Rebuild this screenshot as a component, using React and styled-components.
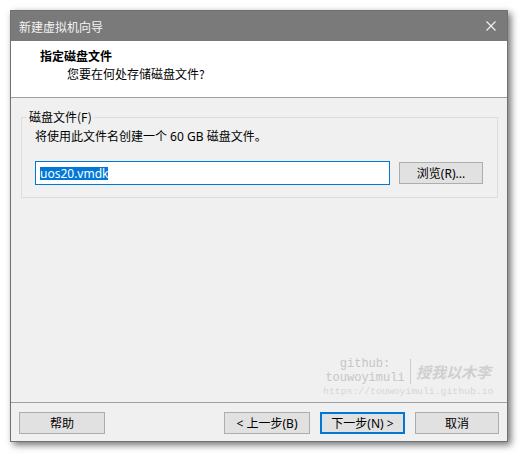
import React from 'react';
import styled, { createGlobalStyle } from 'styled-components';

const GlobalStyle = createGlobalStyle`
  html, body {
    margin: 0;
    padding: 0;
    background: #ffffff;
  }
  body {
    font-family: "Noto Sans", "Noto Sans CJK SC", sans-serif;
    font-size: 12px;
    color: #000;
  }
  * {
    box-sizing: border-box;
  }
`;

const Page = styled.div`
  width: 520px;
  height: 454px;
  padding: 10px 0 0 10px;
`;

const Window = styled.div`
  position: relative;
  width: 498px;
  height: 432px;
  display: flex;
  flex-direction: column;
  background: #f0f0f0;
  border: 1px solid #707070;
  box-shadow: 3px 3px 7px rgba(0, 0, 0, 0.55);
`;

const TitleBar = styled.div`
  height: 30px;
  flex: none;
  display: flex;
  align-items: center;
  justify-content: space-between;
  padding: 0 10px 0 8px;
  background: #7a7a7a;
  color: #f4f4f4;
  font-family: "Noto Sans CJK SC", sans-serif;
  font-size: 12px;
`;

const CloseIcon = styled.svg`
  width: 10px;
  height: 10px;
  margin-right: 1px;
`;

const Header = styled.div`
  height: 57px;
  flex: none;
  padding: 6px 0 0 29px;
  background: #ffffff;
  border-bottom: 1px solid #a0a0a0;
  font-family: "Noto Sans CJK SC", sans-serif;
  line-height: 18px;
`;

const HeaderTitle = styled.div`
  font-weight: bold;
`;

const HeaderSub = styled.div`
  padding-left: 27px;
`;

const Body = styled.div`
  flex: 1;
  padding: 10px 9px 0 10px;
`;

const Group = styled.fieldset`
  margin: 0;
  padding: 2px 14px 12px 13px;
  border: 1px solid #dcdcdc;
`;

const Legend = styled.legend`
  margin-left: -8px;
  padding: 0 2px;
  line-height: 18px;
  font-family: "Noto Sans CJK SC", sans-serif;
`;

const Info = styled.div`
  line-height: 18px;
  font-family: "Noto Sans", "Noto Sans CJK SC", sans-serif;
`;

const Row = styled.div`
  display: flex;
  align-items: flex-start;
  margin-top: 15px;
`;

const Field = styled.div`
  width: 355px;
  height: 24px;
  display: flex;
  align-items: center;
  padding-left: 4px;
  background: #ffffff;
  border: 1px solid #0078d7;
  font-family: "Noto Sans", sans-serif;
`;

const Selected = styled.span`
  background: #0078d7;
  color: #ffffff;
  line-height: 13px;
`;

const Button = styled.div`
  width: ${p => p.$w || 86}px;
  height: 22px;
  display: flex;
  align-items: center;
  justify-content: center;
  background: #e1e1e1;
  border: ${p => (p.$primary ? '2px solid #0078d7' : '1px solid #adadad')};
  font-family: "Noto Sans", "Noto Sans CJK SC", sans-serif;
  white-space: pre;
`;

const BrowseButton = styled(Button)`
  margin: 1px 0 0 9px;
`;

const Footer = styled.div`
  height: 39px;
  flex: none;
  display: flex;
  align-items: flex-start;
  gap: 10px;
  padding: 9px 8px 0 8px;
  border-top: 1px solid #a0a0a0;
`;

const Spacer = styled.div`
  flex: 1;
`;

const Watermark = styled.div`
  position: absolute;
  left: 312px;
  top: 346px;
  color: #c6c6c6;
  pointer-events: none;
`;

const MarkTop = styled.div`
  display: flex;
  align-items: center;
`;

const MarkHandle = styled.div`
  width: 80px;
  margin-left: 2px;
  text-align: center;
  font-family: "Liberation Mono", monospace;
  font-size: 12px;
  line-height: 14px;
`;

const MarkLine = styled.div`
  height: 14px;
`;

const MarkDivider = styled.div`
  width: 1px;
  height: 25px;
  margin: 0 5px;
  background: #cccccc;
`;

const MarkName = styled.div`
  font-family: "Noto Sans CJK SC", serif;
  font-size: 15px;
  font-style: italic;
  font-weight: bold;
  color: #cfcfcf;
`;

const MarkUrl = styled.div`
  margin-top: 1px;
  font-family: "Liberation Mono", monospace;
  font-size: 9.8px;
  line-height: 12px;
  color: #d6d6d6;
`;

export default function App() {
  return (
    <Page>
      <GlobalStyle />
      <Window>
        <TitleBar>
          <span>新建虚拟机向导</span>
          <CloseIcon viewBox="0 0 10 10">
            <path d="M0.5 0.5 L9.5 9.5 M9.5 0.5 L0.5 9.5" stroke="#f4f4f4" strokeWidth="1.1" fill="none" />
          </CloseIcon>
        </TitleBar>
        <Header>
          <HeaderTitle>指定磁盘文件</HeaderTitle>
          <HeaderSub>您要在何处存储磁盘文件?</HeaderSub>
        </Header>
        <Body>
          <Group>
            <Legend>磁盘文件(F)</Legend>
            <Info>将使用此文件名创建一个 60 GB 磁盘文件。</Info>
            <Row>
              <Field>
                <Selected>uos20.vmdk</Selected>
              </Field>
              <BrowseButton $w={84}>浏览(R)...</BrowseButton>
            </Row>
          </Group>
        </Body>
        <Footer>
          <Button>帮助</Button>
          <Spacer />
          <Button>{'< 上一步(B)'}</Button>
          <Button $primary $w={85}>{'下一步(N) >'}</Button>
          <Button $w={84}>取消</Button>
        </Footer>
        <Watermark>
          <MarkTop>
            <MarkHandle>
              <MarkLine>github:</MarkLine>
              <MarkLine>touwoyimuli</MarkLine>
            </MarkHandle>
            <MarkDivider />
            <MarkName>授我以木李</MarkName>
          </MarkTop>
          <MarkUrl>https://touwoyimuli.github.io</MarkUrl>
        </Watermark>
      </Window>
    </Page>
  );
}
